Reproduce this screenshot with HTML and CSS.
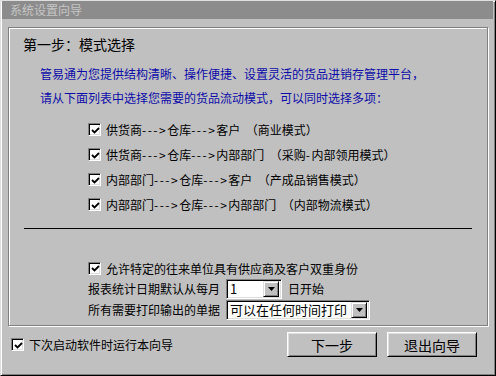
FILE: index.html
```html
<!DOCTYPE html>
<html lang="zh-CN">
<head>
  <meta charset="UTF-8" />
  <title>系统设置向导</title>
  <link rel="stylesheet" href="styles.css">
</head>
<body>

  <div class="window">
    <div class="titlebar">系统设置向导</div>

    <div class="content">
      <div class="panel">
        <h1>第一步：模式选择</h1>
        <p class="intro">管易通为您提供结构清晰、操作便捷、设置灵活的货品进销存管理平台，<br>请从下面列表中选择您需要的货品流动模式，可以同时选择多项：</p>

        <ul class="modes">
          <li><span class="chk"><svg viewBox="0 0 9 9"><path d="M1 4 L3.5 6.5 L8 2" /></svg></span><span class="txt">供货商<span class="ar">---&gt;</span>仓库<span class="ar">---&gt;</span>客户  （商业模式）</span></li>
          <li><span class="chk"><svg viewBox="0 0 9 9"><path d="M1 4 L3.5 6.5 L8 2" /></svg></span><span class="txt">供货商<span class="ar">---&gt;</span>仓库<span class="ar">---&gt;</span>内部部门  （采购<span class="ar">-</span>内部领用模式）</span></li>
          <li><span class="chk"><svg viewBox="0 0 9 9"><path d="M1 4 L3.5 6.5 L8 2" /></svg></span><span class="txt">内部部门<span class="ar">---&gt;</span>仓库<span class="ar">---&gt;</span>客户  （产成品销售模式）</span></li>
          <li><span class="chk"><svg viewBox="0 0 9 9"><path d="M1 4 L3.5 6.5 L8 2" /></svg></span><span class="txt">内部部门<span class="ar">---&gt;</span>仓库<span class="ar">---&gt;</span>内部部门  （内部物流模式）</span></li>
        </ul>

        <div class="sep"></div>

        <div class="options">
          <div class="row"><span class="chk"><svg viewBox="0 0 9 9"><path d="M1 4 L3.5 6.5 L8 2" /></svg></span>允许特定的往来单位具有供应商及客户双重身份</div>
          <div class="row field">报表统计日期默认从每月
            <div class="combo day"><span class="val">1</span><span class="drop"><svg viewBox="0 0 7 4"><path d="M0 0 H7 L3.5 4 Z" /></svg></span></div>
            日开始
          </div>
          <div class="row field">所有需要打印输出的单据
            <div class="combo print"><span class="val">可以在任何时间打印</span><span class="drop"><svg viewBox="0 0 7 4"><path d="M0 0 H7 L3.5 4 Z" /></svg></span></div>
          </div>
        </div>
      </div>

      <div class="footer">
        <div class="row startup"><span class="chk"><svg viewBox="0 0 9 9"><path d="M1 4 L3.5 6.5 L8 2" /></svg></span>下次启动软件时运行本向导</div>
        <div class="buttons">
          <button>下一步</button>
          <button>退出向导</button>
        </div>
      </div>
    </div>
  </div>

</body>
</html>
```

FILE: styles.css
```css
body {
  margin: 0;
  padding: 0;
  background-color: #c0c0c0;
  font-family: "Noto Sans CJK SC", sans-serif;
  font-size: 12px;
  color: #000000;
}

.window {
  width: 496px;
  height: 376px;
  box-sizing: border-box;
  background-color: #c0c0c0;
  border-top: 1px solid #dfdfdf;
  border-left: 1px solid #dfdfdf;
  border-right: 1px solid #000;
  border-bottom: 1px solid #000;
  box-shadow: inset 1px 1px 0 #fff, inset -1px -1px 0 #808080;
}

.titlebar {
  height: 18px;
  margin: 0 2px 0 1px;
  padding-left: 8px;
  background-color: #8c8c8c;
  color: #c6c6c6;
  line-height: 18px;
  font-size: 12px;
}

.content {
  padding: 8px 7px 0 7px;
}

/* etched group panel */
.panel {
  height: 299px;
  box-sizing: border-box;
  border: 1px solid #808080;
  box-shadow: inset 1px 1px 0 #fff, 1px 1px 0 #fff;
  padding-left: 14px;
}

.panel h1 {
  margin: 8px 0 0 0;
  font-size: 14px;
  font-weight: normal;
  line-height: 16px;
}

.intro {
  margin: 10px 0 0 17px;
  color: #0c0ca8;
  line-height: 24px;
}

.modes {
  list-style: none;
  margin: 7px 0 0 65px;
  padding: 0;
}

.modes li {
  display: flex;
  align-items: center;
  height: 25px;
}

.txt {
  white-space: pre;
}

.ar {
  letter-spacing: 1.5px;
}

.chk {
  width: 13px;
  height: 13px;
  box-sizing: border-box;
  margin-right: 5px;
  flex: none;
  background-color: #fff;
  border-top: 1px solid #808080;
  border-left: 1px solid #808080;
  border-right: 1px solid #fff;
  border-bottom: 1px solid #fff;
  box-shadow: inset 1px 1px 0 #000, inset -1px -1px 0 #dfdfdf;
  display: flex;
  align-items: center;
  justify-content: center;
}

.chk svg {
  width: 9px;
  height: 9px;
  margin: 1px 0 0 1px;
}

.chk path {
  fill: none;
  stroke: #000;
  stroke-width: 1.8;
}

.sep {
  margin: 11px 0 0 1px;
  width: 448px;
  height: 1px;
  background-color: #000;
}

.options {
  margin: 29px 0 0 65px;
}

.row {
  display: flex;
  align-items: center;
  height: 20px;
}

.row.field {
  height: 21px;
}

.combo {
  display: flex;
  align-items: center;
  height: 20px;
  box-sizing: border-box;
  margin: 0 6px;
  background-color: #fff;
  border-top: 1px solid #808080;
  border-left: 1px solid #808080;
  border-right: 1px solid #fff;
  border-bottom: 1px solid #fff;
  box-shadow: inset 1px 1px 0 #000, inset -1px -1px 0 #dfdfdf;
  padding: 2px;
}

.combo.day {
  width: 56px;
}

.combo.print {
  width: 144px;
}

.combo .val {
  flex: 1;
  padding-left: 1px;
  font-size: 13px;
  line-height: 16px;
}

.drop {
  width: 16px;
  height: 16px;
  box-sizing: border-box;
  background-color: #c0c0c0;
  border-top: 1px solid #dfdfdf;
  border-left: 1px solid #dfdfdf;
  border-right: 1px solid #000;
  border-bottom: 1px solid #000;
  box-shadow: inset 1px 1px 0 #fff, inset -1px -1px 0 #808080;
  display: flex;
  align-items: center;
  justify-content: center;
}

.drop svg {
  width: 7px;
  height: 4px;
}

.drop path {
  fill: #000;
}

.footer {
  display: flex;
  align-items: center;
  justify-content: space-between;
  margin-top: 6px;
  padding: 0 11px 0 3px;
}

.buttons {
  display: flex;
  gap: 10px;
}

.buttons button {
  width: 90px;
  height: 25px;
  padding: 0;
  font-family: "Noto Sans CJK SC", sans-serif;
  font-size: 14px;
  color: #000;
  background-color: #c0c0c0;
  border-top: 1px solid #fff;
  border-left: 1px solid #fff;
  border-right: 1px solid #000;
  border-bottom: 1px solid #000;
  box-shadow: inset 1px 1px 0 #dfdfdf, inset -1px -1px 0 #808080;
}
```
